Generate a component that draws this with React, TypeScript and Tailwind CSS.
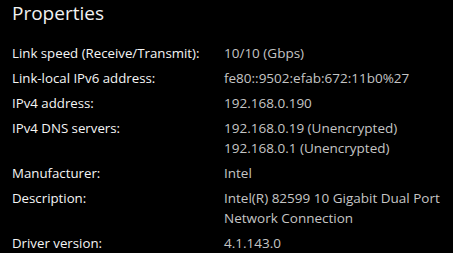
import React from 'react'

interface Property {
  label: string
  value: string[]
}

const properties: Property[] = [
  { label: 'Link speed (Receive/Transmit):', value: ['10/10 (Gbps)'] },
  { label: 'Link-local IPv6 address:', value: ['fe80::9502:efab:672:11b0%27'] },
  { label: 'IPv4 address:', value: ['192.168.0.190'] },
  {
    label: 'IPv4 DNS servers:',
    value: ['192.168.0.19 (Unencrypted)', '192.168.0.1 (Unencrypted)'],
  },
  { label: 'Manufacturer:', value: ['Intel'] },
  {
    label: 'Description:',
    value: ['Intel(R) 82599 10 Gigabit Dual Port', 'Network Connection'],
  },
  { label: 'Driver version:', value: ['4.1.143.0'] },
]

export default function App() {
  return (
    <div className="w-[453px] h-[253px] overflow-hidden bg-black pl-3 font-['Open_Sans',sans-serif] antialiased">
      {/* Title */}
      <h1 className="text-[19px] leading-[26px] text-[#f2f2f2]">Properties</h1>

      {/* Property rows */}
      <div className="mt-[17px] flex flex-col gap-[5px]">
        {properties.map((p) => (
          <div key={p.label} className="grid grid-cols-[212px_1fr] leading-[20px]">
            <div className="text-[13.25px] text-[#f5f5f5]">{p.label}</div>
            <div className="flex flex-col text-[13.5px] text-[#c5c5c5]">
              {p.value.map((line) => (
                <span key={line}>{line}</span>
              ))}
            </div>
          </div>
        ))}
      </div>
    </div>
  )
}
